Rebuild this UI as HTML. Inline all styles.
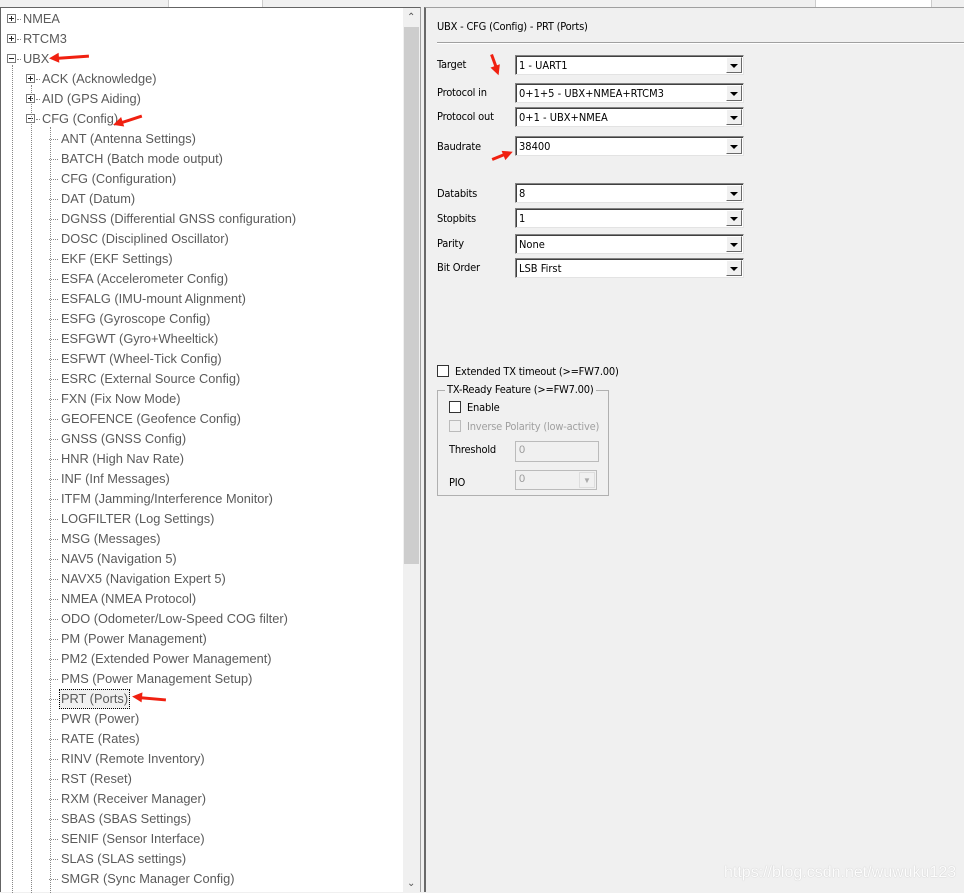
<!DOCTYPE html>
<html><head><meta charset="utf-8"><style>
*{margin:0;padding:0;box-sizing:border-box}
body{width:964px;height:892px;background:#f0f0f0;position:relative;overflow:hidden;font-family:"Liberation Sans","Noto Sans CJK SC",sans-serif}
.abs{position:absolute}
#tree{left:0;top:7px;width:421px;height:885px;background:#fff;border-top:1px solid #646464;border-left:1px solid #646464;border-right:1px solid #a0a0a0}
.row{position:absolute;height:20px;line-height:20px;font-size:12.8px;color:#5a5a5a;white-space:nowrap}
.box{position:absolute;width:9px;height:9px;border:1px solid #7a7a7a;background:#fff}
.box:before{content:"";position:absolute;left:1px;top:3px;width:5px;height:1px;background:#222}
.box.p:after{content:"";position:absolute;left:3px;top:1px;width:1px;height:5px;background:#222}
.hd{position:absolute;height:0;border-top:1px dotted #888}
.vd{position:absolute;width:0;border-left:1px dotted #888}
.lbl{position:absolute;font-size:11px;color:#000;font-family:"DejaVu Sans Condensed","Liberation Sans",sans-serif;letter-spacing:-0.2px}
.cb{position:absolute;left:515px;width:229px;height:20px;background:#fff;border:1px solid #828282;border-right-color:#e3e3e3;border-bottom-color:#e3e3e3;box-shadow:inset 1px 1px 0 #404040}
.cb span{position:absolute;left:3px;top:3px;font-size:11px;font-family:"DejaVu Sans Condensed","Liberation Sans",sans-serif}
.cb i{position:absolute;right:1px;top:1px;width:16px;height:16px;background:#f0f0f0;border:1px solid #fff;border-right-color:#696969;border-bottom-color:#696969}
.cb i:after{content:"";position:absolute;left:3px;top:6px;border-left:4px solid transparent;border-right:4px solid transparent;border-top:4px solid #000}
.chk{position:absolute;width:12px;height:12px;background:#fff;border:1px solid #333}
.arrow{position:absolute;height:3px;background:#f02010;transform-origin:left center}
.arrow:before{content:"";position:absolute;left:-6px;top:-4px;border-right:10px solid #f02010;border-top:5.5px solid transparent;border-bottom:5.5px solid transparent}
</style></head><body>
<div class="abs" style="left:168px;top:0;width:95px;height:7px;background:#fff;border-left:1px solid #ccc;border-right:1px solid #ccc"></div>
<div class="abs" style="left:815px;top:0;width:117px;height:7px;background:#fff;border-left:1px solid #ccc;border-right:1px solid #ccc"></div>
<div id="tree" class="abs">
<div class="abs" style="left:402px;top:0;width:17px;height:885px;background:#f0f0f0"></div>
<div class="abs" style="left:403px;top:19px;width:15px;height:537px;background:#cdcdcd"></div>
<div class="abs" style="left:406px;top:4px;font-size:10px;color:#555">&#8963;</div>
<div class="abs" style="left:406px;top:870px;font-size:10px;color:#555">&#8964;</div>
</div>
<div class="abs" style="left:424px;top:7px;width:540px;height:885px;border-top:1px solid #a0a0a0;border-left:2px solid #696969"></div>
<div id="rows"></div>
<div class="vd" style="left:12px;top:65px;height:828px"></div>
<div class="vd" style="left:31px;top:85px;height:808px"></div>
<div class="vd" style="left:50px;top:127px;height:766px"></div>
<script>
var L0=["NMEA","RTCM3","UBX"],L1=["ACK (Acknowledge)","AID (GPS Aiding)","CFG (Config)"];
var L2=["ANT (Antenna Settings)","BATCH (Batch mode output)","CFG (Configuration)","DAT (Datum)","DGNSS (Differential GNSS configuration)","DOSC (Disciplined Oscillator)","EKF (EKF Settings)","ESFA (Accelerometer Config)","ESFALG (IMU-mount Alignment)","ESFG (Gyroscope Config)","ESFGWT (Gyro+Wheeltick)","ESFWT (Wheel-Tick Config)","ESRC (External Source Config)","FXN (Fix Now Mode)","GEOFENCE (Geofence Config)","GNSS (GNSS Config)","HNR (High Nav Rate)","INF (Inf Messages)","ITFM (Jamming/Interference Monitor)","LOGFILTER (Log Settings)","MSG (Messages)","NAV5 (Navigation 5)","NAVX5 (Navigation Expert 5)","NMEA (NMEA Protocol)","ODO (Odometer/Low-Speed COG filter)","PM (Power Management)","PM2 (Extended Power Management)","PMS (Power Management Setup)","PRT (Ports)","PWR (Power)","RATE (Rates)","RINV (Remote Inventory)","RST (Reset)","RXM (Receiver Manager)","SBAS (SBAS Settings)","SENIF (Sensor Interface)","SLAS (SLAS settings)","SMGR (Sync Manager Config)"];
var h="";
function add(lvl,i,t,box){var y=9+i*20;var bx=7+lvl*19,tx=23+lvl*19;
 if(box)h+='<div class="box '+(box=="p"?"p":"")+'" style="left:'+bx+'px;top:'+(y+5)+'px"></div><div class="hd" style="left:'+(bx+10)+'px;top:'+(y+10)+'px;width:4px"></div>';
 else h+='<div class="hd" style="left:'+(tx-12)+'px;top:'+(y+10)+'px;width:9px"></div>';
 var sel=t=="PRT (Ports)"?'border:1px dotted #000;background:#f0f0f0;padding:0 1px;left:'+(tx-2)+'px;line-height:18px;height:20px;':'left:'+tx+'px;';
 h+='<div class="row" style="'+sel+'top:'+y+'px">'+t+'</div>';}
L0.forEach(function(t,i){add(0,i,t,i<2?"p":"m")});
L1.forEach(function(t,i){add(1,i+3,t,i<2?"p":"m")});
L2.forEach(function(t,i){add(2,i+6,t,null)});
document.getElementById("rows").innerHTML=h;
</script>
<div class="lbl" style="left:437px;top:20px">UBX - CFG (Config) - PRT (Ports)</div>
<div class="abs" style="left:437px;top:42px;width:527px;height:2px;background:linear-gradient(#a0a0a0 50%,#fff 50%)"></div>
<div class="lbl" style="left:437px;top:58px">Target</div>
<div class="cb" style="top:55px"><span>1 - UART1</span><i></i></div>
<div class="lbl" style="left:437px;top:86px">Protocol in</div>
<div class="cb" style="top:83px"><span>0+1+5 - UBX+NMEA+RTCM3</span><i></i></div>
<div class="lbl" style="left:437px;top:110px">Protocol out</div>
<div class="cb" style="top:107px"><span>0+1 - UBX+NMEA</span><i></i></div>
<div class="lbl" style="left:437px;top:140px">Baudrate</div>
<div class="cb" style="top:136px"><span>38400</span><i></i></div>
<div class="lbl" style="left:437px;top:187px">Databits</div>
<div class="cb" style="top:183px"><span>8</span><i></i></div>
<div class="lbl" style="left:437px;top:212px">Stopbits</div>
<div class="cb" style="top:208px"><span>1</span><i></i></div>
<div class="lbl" style="left:437px;top:237px">Parity</div>
<div class="cb" style="top:234px"><span>None</span><i></i></div>
<div class="lbl" style="left:437px;top:261px">Bit Order</div>
<div class="cb" style="top:258px"><span>LSB First</span><i></i></div>
<div class="chk" style="left:437px;top:365px"></div>
<div class="lbl" style="left:455px;top:365px">Extended TX timeout (&gt;=FW7.00)</div>
<div class="abs" style="left:437px;top:390px;width:172px;height:106px;border:1px solid #b0b0b0"></div>
<div class="lbl" style="left:445px;top:383px;background:#f0f0f0;padding:0 2px">TX-Ready Feature (&gt;=FW7.00)</div>
<div class="chk" style="left:449px;top:401px"></div>
<div class="lbl" style="left:467px;top:401px">Enable</div>
<div class="chk" style="left:449px;top:420px;background:#f0f0f0;border-color:#bbb"></div>
<div class="lbl" style="left:467px;top:420px;color:#a0a0a0">Inverse Polarity (low-active)</div>
<div class="lbl" style="left:449px;top:443px">Threshold</div>
<div class="abs" style="left:515px;top:441px;width:84px;height:21px;border:1px solid #bbb;background:#f0f0f0;font-size:11px;color:#999;padding:2px 3px">0</div>
<div class="lbl" style="left:449px;top:476px">PIO</div>
<div class="abs" style="left:515px;top:470px;width:82px;height:20px;border:1px solid #bbb;background:#f0f0f0;font-size:11px;color:#999;padding:2px 3px">0<span style="position:absolute;right:1px;top:1px;width:16px;height:16px;border:1px solid #ddd;color:#aaa;font-size:8px;text-align:center;line-height:16px">▼</span></div>
<div class="abs" style="left:724px;top:864px;font-size:16px;color:#fff;text-shadow:0 0 1px #aaa;opacity:.9">https://blog.csdn.net/wuwuku123</div>
<div class="arrow" style="left:55px;top:57px;width:34px;transform:rotate(-4deg)"></div>
<div class="arrow" style="left:119px;top:122px;width:24px;transform:rotate(-18deg)"></div>
<div class="arrow" style="left:138px;top:696px;width:28px;transform:rotate(5deg)"></div>
<div class="arrow" style="left:497px;top:68px;width:16px;transform:rotate(-110deg)"></div>
<div class="arrow" style="left:507px;top:152px;width:16px;transform:rotate(158deg)"></div>
</body></html>
